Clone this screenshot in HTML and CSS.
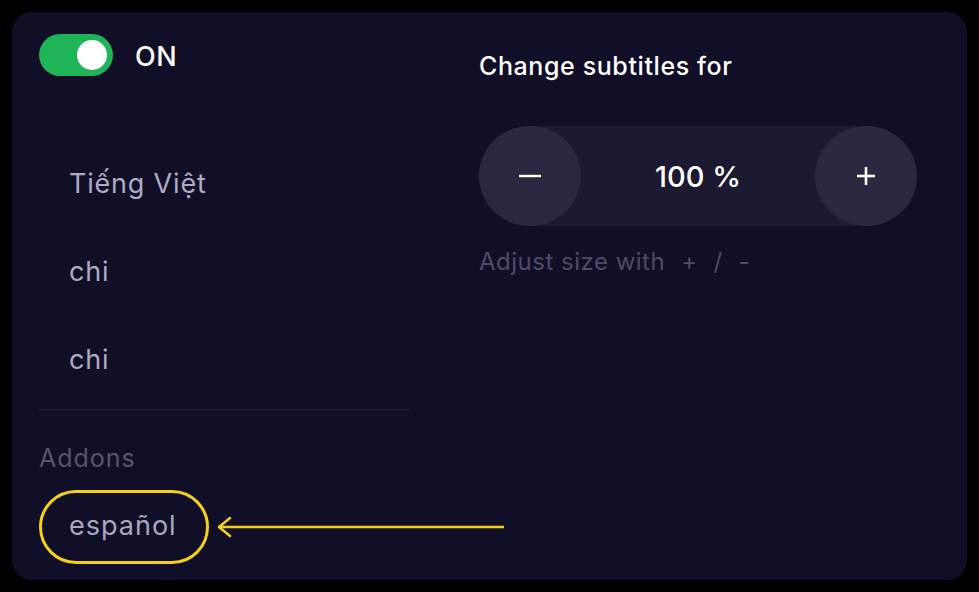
FILE: index.html
```html
<!DOCTYPE html>
<html>
<head>
<meta charset="utf-8">
<link rel="stylesheet" href="styles.css">
</head>
<body>
<div class="panel">
  <div class="left">
    <div class="toggle-row">
      <div class="toggle"><div class="knob"></div></div>
      <span class="toggle-label">ON</span>
    </div>
    <ul class="langs">
      <li class="lang">Tiếng Việt</li>
      <li class="lang">chi</li>
      <li class="lang">chi</li>
    </ul>
    <div class="divider"></div>
    <div class="addons-title">Addons</div>
    <div class="addon-row">
      <div class="addon highlighted">español</div>
      <svg class="arrow" width="290" height="24" viewBox="0 0 290 24">
        <line x1="2" y1="12" x2="287" y2="12" stroke="#f7d117" stroke-width="2.5"/>
        <polyline points="13,3 2,12 13,21" fill="none" stroke="#f7d117" stroke-width="2.5" stroke-linecap="round" stroke-linejoin="round"/>
      </svg>
    </div>
  </div>
  <div class="right">
    <div class="title">Change subtitles for</div>
    <div class="stepper">
      <button class="step-btn" aria-label="decrease">
        <svg width="24" height="24" viewBox="0 0 24 24"><line x1="1" y1="12" x2="23" y2="12" stroke="#fff" stroke-width="2.4"/></svg>
      </button>
      <span class="value">100 %</span>
      <button class="step-btn" aria-label="increase">
        <svg width="24" height="24" viewBox="0 0 24 24"><line x1="3" y1="12" x2="21" y2="12" stroke="#fff" stroke-width="2.6"/><line x1="12" y1="3" x2="12" y2="21" stroke="#fff" stroke-width="2.6"/></svg>
      </button>
    </div>
    <div class="hint">Adjust size with<span class="keys"><span class="key">+</span><span class="key">/</span><span class="key">-</span></span></div>
  </div>
</div>
</body>
</html>
```
FILE: styles.css
```css
* { box-sizing: border-box; }
html, body { margin: 0; padding: 0; }
body {
  background: #000;
  width: 979px;
  height: 592px;
  font-family: "Inter", "Noto Sans", sans-serif;
  overflow: hidden;
}
.panel {
  margin: 12px;
  width: 955px;
  height: 568px;
  background: #110e27;
  border-radius: 20px;
  display: flex;
  padding: 22px 0 0 27px;
}
.left {
  width: 371px;
  display: flex;
  flex-direction: column;
}
.toggle-row {
  display: flex;
  align-items: center;
  gap: 22px;
  height: 42px;
}
.toggle {
  width: 74px;
  height: 42px;
  border-radius: 21px;
  background: #1fb457;
  position: relative;
}
.knob {
  position: absolute;
  right: 6px;
  top: 6px;
  width: 30px;
  height: 30px;
  border-radius: 50%;
  background: #fff;
}
.toggle-label {
  color: #fff;
  font-size: 27px;
  font-weight: 500;
  letter-spacing: 0.5px;
  margin-top: 2px;
}
.langs {
  list-style: none;
  margin: 63px 0 0;
  padding: 0;
}
.lang {
  height: 88px;
  display: flex;
  align-items: center;
  padding-left: 30px;
  color: #aeacc3;
  font-size: 27px;
  letter-spacing: 0.8px;
}
.divider {
  margin-top: 6px;
  height: 1px;
  background: #23203b;
}
.addons-title {
  margin-top: 33px;
  color: #57546f;
  font-size: 25px;
  letter-spacing: 1px;
  height: 30px;
  line-height: 30px;
}
.addon-row {
  margin-top: 17px;
  display: flex;
  align-items: center;
  position: relative;
}
.addon {
  width: 170px;
  height: 74px;
  border-radius: 37px;
  display: flex;
  align-items: center;
  padding-left: 27px;
  padding-bottom: 3px;
  color: #aaa8c0;
  font-size: 27px;
  letter-spacing: 1px;
}
.highlighted {
  border: 3px solid #f7d117;
}
.arrow {
  position: absolute;
  left: 178px;
  top: 25px;
}
.right {
  margin-left: 69px;
  width: 438px;
  display: flex;
  flex-direction: column;
}
.title {
  margin-top: 17px;
  color: #fff;
  font-size: 25px;
  font-weight: 500;
  letter-spacing: 0.6px;
  height: 30px;
  line-height: 30px;
}
.stepper {
  margin-top: 45px;
  height: 100px;
  border-radius: 50px;
  background: #1c1932;
  display: flex;
  align-items: center;
  justify-content: space-between;
}
.step-btn {
  width: 102px;
  height: 100px;
  border-radius: 50%;
  border: none;
  background: #2a2740;
  display: flex;
  align-items: center;
  justify-content: center;
  padding: 0;
}
.value {
  color: #fff;
  font-size: 29px;
  font-weight: 500;
}
.hint {
  margin-top: 21px;
  color: #4e4b67;
  font-size: 24px;
  letter-spacing: 0.5px;
  height: 30px;
  line-height: 30px;
  display: flex;
  align-items: center;
}
.keys {
  display: inline-flex;
  margin-left: 16px;
  gap: 16px;
}
.key {
  font-size: 24px;
}
```
